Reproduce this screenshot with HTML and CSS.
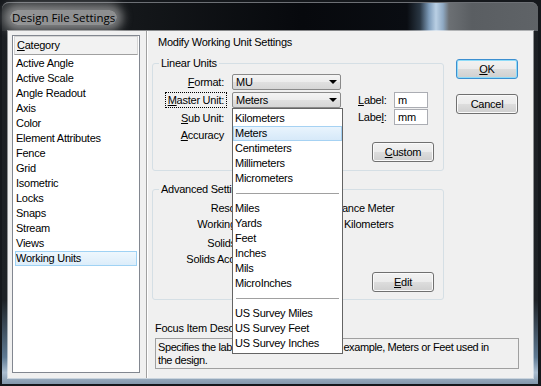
FILE: index.html
```html
<!DOCTYPE html>
<html lang="en">

<head>
  <meta charset="UTF-8" />
  <meta name="viewport" content="width=device-width, initial-scale=1.0" />
  <title>Design File Settings</title>
  <link rel="stylesheet" href="styles.css">
</head>

<body>
  <div class="window">
    <div class="titleBar"><span class="titleText">Design File Settings</span></div>

    <div class="client">
      <!-- category list -->
      <aside class="sidebar">
        <div class="catList">
          <div class="catHeader"><u>C</u>ategory</div>
          <ul class="catItems">
            <li>Active Angle</li>
            <li>Active Scale</li>
            <li>Angle Readout</li>
            <li>Axis</li>
            <li>Color</li>
            <li>Element Attributes</li>
            <li>Fence</li>
            <li>Grid</li>
            <li>Isometric</li>
            <li>Locks</li>
            <li>Snaps</li>
            <li>Stream</li>
            <li>Views</li>
            <li class="selected">Working Units</li>
          </ul>
        </div>
      </aside>

      <main class="panel">
        <div class="panelRow">
          <div class="groups">
            <div class="panelTitle">Modify Working Unit Settings</div>

            <fieldset class="group">
              <legend>Linear Units</legend>
              <div class="linearTop">
                <div class="unitGrid">
                  <label><u>F</u>ormat:</label>
                  <div class="combo">MU</div>
                  <label class="focused"><u>M</u>aster Unit:</label>
                  <div class="combo open">Meters
                    <!-- opened list of the master unit combo -->
                    <ul class="dropList">
                      <li>Kilometers</li>
                      <li class="active">Meters</li>
                      <li>Centimeters</li>
                      <li>Millimeters</li>
                      <li>Micrometers</li>
                      <li class="sep"></li>
                      <li>Miles</li>
                      <li>Yards</li>
                      <li>Feet</li>
                      <li>Inches</li>
                      <li>Mils</li>
                      <li>MicroInches</li>
                      <li class="sep"></li>
                      <li>US Survey Miles</li>
                      <li>US Survey Feet</li>
                      <li>US Survey Inches</li>
                    </ul>
                  </div>
                  <label><u>S</u>ub Unit:</label>
                  <div class="combo"></div>
                  <label><u>A</u>ccuracy</label>
                  <div class="combo"></div>
                </div>
                <div class="labelGrid">
                  <label><u>L</u>abel:</label>
                  <div class="textBox">m</div>
                  <label>Labe<u>l</u>:</label>
                  <div class="textBox">mm</div>
                </div>
              </div>
              <div class="groupFoot"><button class="btn"><u>C</u>ustom</button></div>
            </fieldset>

            <fieldset class="group advanced">
              <legend>Advanced Settings</legend>
              <div class="advGrid">
                <span class="advLabel">Resolution:</span>
                <span>100000 per Distance Meter</span>
                <span class="advLabel">Working Area:</span>
                <span>429496729.500 Kilometers</span>
                <span class="advLabel">Solids Area:</span>
                <span>1 Meters</span>
                <span class="advLabel">Solids Accuracy:</span>
                <span>0.00001 Meters</span>
              </div>
              <div class="groupFoot"><button class="btn"><u>E</u>dit</button></div>
            </fieldset>
          </div>

          <div class="actions">
            <button class="btn default"><u>O</u>K</button>
            <button class="btn">Cancel</button>
          </div>
        </div>

        <div class="focusLabel">Focus Item Description</div>
        <div class="focusBox">Specifies the label of the master unit. For example, Meters or Feet used in the design.</div>
      </main>
    </div>
  </div>
</body>

</html>
```

FILE: styles.css
```css
* {
  padding: 0;
  margin: 0;
  box-sizing: border-box;
}

body {
  width: 541px;
  height: 386px;
  overflow: hidden;
  background: #15181c;
  font-family: "Liberation Sans", Arial, sans-serif;
  font-size: 11px;
  letter-spacing: -0.25px;
  color: #000;
}

ul {
  list-style: none;
}

.window {
  margin: 2px 0 0 2px;
  width: 536px;
  height: 382px;
  border-radius: 7px 7px 0 0;
  display: flex;
  flex-direction: column;
  background: linear-gradient(#1c1f23 0, #1e2226 78%, #5f7a93 93%, #aabdd0 97%, #8397ab 100%);
  box-shadow: inset 0 1px rgba(255, 255, 255, 0.35);
}

.titleBar {
  height: 29px;
  flex: none;
  display: flex;
  align-items: center;
  padding-left: 8px;
  border-radius: 7px 7px 0 0;
  background: linear-gradient(to right, #2b2e31 0, #15181b 120px, #07090d 300px, #0a0d12 405px, #2a3744 418px, #7d9bb9 427px, #b9cfe4 434px, #8fa9c3 441px, #6c7074 447px, #5a5e62 470px, #5f6367 100%);
  border-top: 1px solid #6d7075;
}

.titleText {
  font-family: "Open Sans", sans-serif;
  font-size: 11.5px;
  letter-spacing: 0;
  color: #000;
  padding: 0 2px;
  border-radius: 10px;
  background: rgba(205, 205, 205, 0.65);
  box-shadow: 0 0 10px 6px rgba(205, 205, 205, 0.55);
}

.client {
  flex: 1;
  margin: 0 5px 6px 6px;
  display: flex;
  background: #f0f0f0;
  box-shadow: 0 0 0 1px rgba(255, 255, 255, 0.5);
}

/* left side */
.sidebar {
  width: 139px;
  flex: none;
  padding: 4px 6px 5px 4px;
  border-right: 1px solid #a0a0a0;
  box-shadow: 1px 0 #fff;
}

.catList {
  height: 100%;
  background: #fff;
  border: 1px solid #828790;
  padding: 0 1px;
}

.catHeader {
  height: 19px;
  margin-bottom: 1px;
  padding-left: 2px;
  line-height: 17px;
  background: #f2f2f2;
  border: 1px solid #d5d5d5;
  border-bottom-color: #a0a0a0;
}

.catItems li {
  height: 15px;
  line-height: 13px;
  margin: 0 1px;
  border: 1px solid transparent;
  white-space: nowrap;
}

.catItems li.selected {
  background: linear-gradient(#eef7fd, #dcedfa);
  border-color: #9fd2f4;
}

/* right side */
.panel {
  flex: 1;
  display: flex;
  flex-direction: column;
  padding: 4px 14px 9px 5px;
}

.panelRow {
  display: flex;
}

.groups {
  width: 292px;
}

.panelTitle {
  padding-left: 6px;
  line-height: 14px;
}

.group {
  margin-top: 8px;
  border: 1px solid #d5dfe5;
  border-radius: 3px;
  padding: 0;
}

.group legend {
  margin-left: 6px;
  padding: 0 2px;
  line-height: 13px;
}

.linearTop {
  display: flex;
  padding-top: 4px;
}

.unitGrid {
  display: grid;
  grid-template-columns: 74px 109px;
  grid-template-rows: 16px 16px 15px 15px;
  column-gap: 5px;
  row-gap: 2px;
}

.unitGrid label {
  justify-self: end;
  padding: 0 2px;
  line-height: 14px;
  border: 1px solid transparent;
}

.unitGrid label.focused {
  border: 1px dotted #000;
}

.combo {
  position: relative;
  height: 16px;
  padding-left: 3px;
  line-height: 14px;
  border: 1px solid #8a8a8a;
  border-radius: 2px;
  background: linear-gradient(#f4f4f4 0, #ececec 50%, #e0e0e0 50%, #d6d6d6 100%);
}

.combo::after {
  content: "";
  position: absolute;
  right: 3px;
  top: 5px;
  border-left: 4px solid transparent;
  border-right: 4px solid transparent;
  border-top: 4px solid #000;
}

.dropList {
  position: absolute;
  z-index: 10;
  top: calc(100% + 1px);
  left: -1px;
  width: 111px;
  padding: 2px 0 2px;
  background: #fff;
  border: 1px solid #646464;
}

.dropList li {
  height: 15px;
  line-height: 13px;
  padding-left: 1px;
  border: 1px solid transparent;
  white-space: nowrap;
}

.dropList li.active {
  background: linear-gradient(#e9f4fd, #d6e9f9);
  border-color: #a6d2f3;
}

.dropList li.sep::before {
  content: "";
  display: block;
  margin: 6px 2px 0 1px;
  border-top: 1px solid #a0a0a0;
}

.labelGrid {
  display: grid;
  grid-template-columns: 36px 34px;
  grid-auto-rows: 16px;
  row-gap: 1px;
  margin: 18px 0 0 17px;
  align-self: flex-start;
}

.labelGrid label {
  line-height: 16px;
}

.textBox {
  background: #fff;
  border: 1px solid #abadb3;
  padding-left: 3px;
  line-height: 14px;
}

.groupFoot {
  display: flex;
  justify-content: flex-end;
  padding: 0 9px 8px 0;
}

.btn {
  width: 62px;
  height: 20px;
  font: inherit;
  letter-spacing: inherit;
  color: #000;
  border: 1px solid #707070;
  border-radius: 3px;
  background: linear-gradient(#f2f2f2 0, #ebebeb 50%, #dddddd 50%, #cfcfcf 100%);
  box-shadow: inset 0 0 0 1px #fafafa;
}

.btn.default {
  border-color: #3c8fd0;
  box-shadow: inset 0 0 0 1px #8fdcf8;
}

.advanced {
  margin-top: 12px;
}

.advanced .groupFoot {
  padding-bottom: 7px;
}

.advGrid {
  display: grid;
  grid-template-columns: 110px auto;
  grid-template-rows: 16px 16px 19px 16px;
  column-gap: 5px;
  align-items: end;
  margin-top: 4px;
  line-height: 16px;
  white-space: nowrap;
}

.advLabel {
  text-align: right;
}

.advGrid + .groupFoot {
  margin-top: 5px;
}

.actions {
  width: 62px;
  margin-left: 12px;
  padding-top: 24px;
  display: flex;
  flex-direction: column;
  gap: 15px;
}

.focusLabel {
  margin-top: 22px;
  padding-left: 3px;
  line-height: 13px;
}

.focusBox {
  margin: 3px 0 0 3px;
  height: 31px;
  padding: 2px 18px 0 2px;
  line-height: 13px;
  letter-spacing: -0.4px;
  border: 1px solid #a0a0a0;
}
```
